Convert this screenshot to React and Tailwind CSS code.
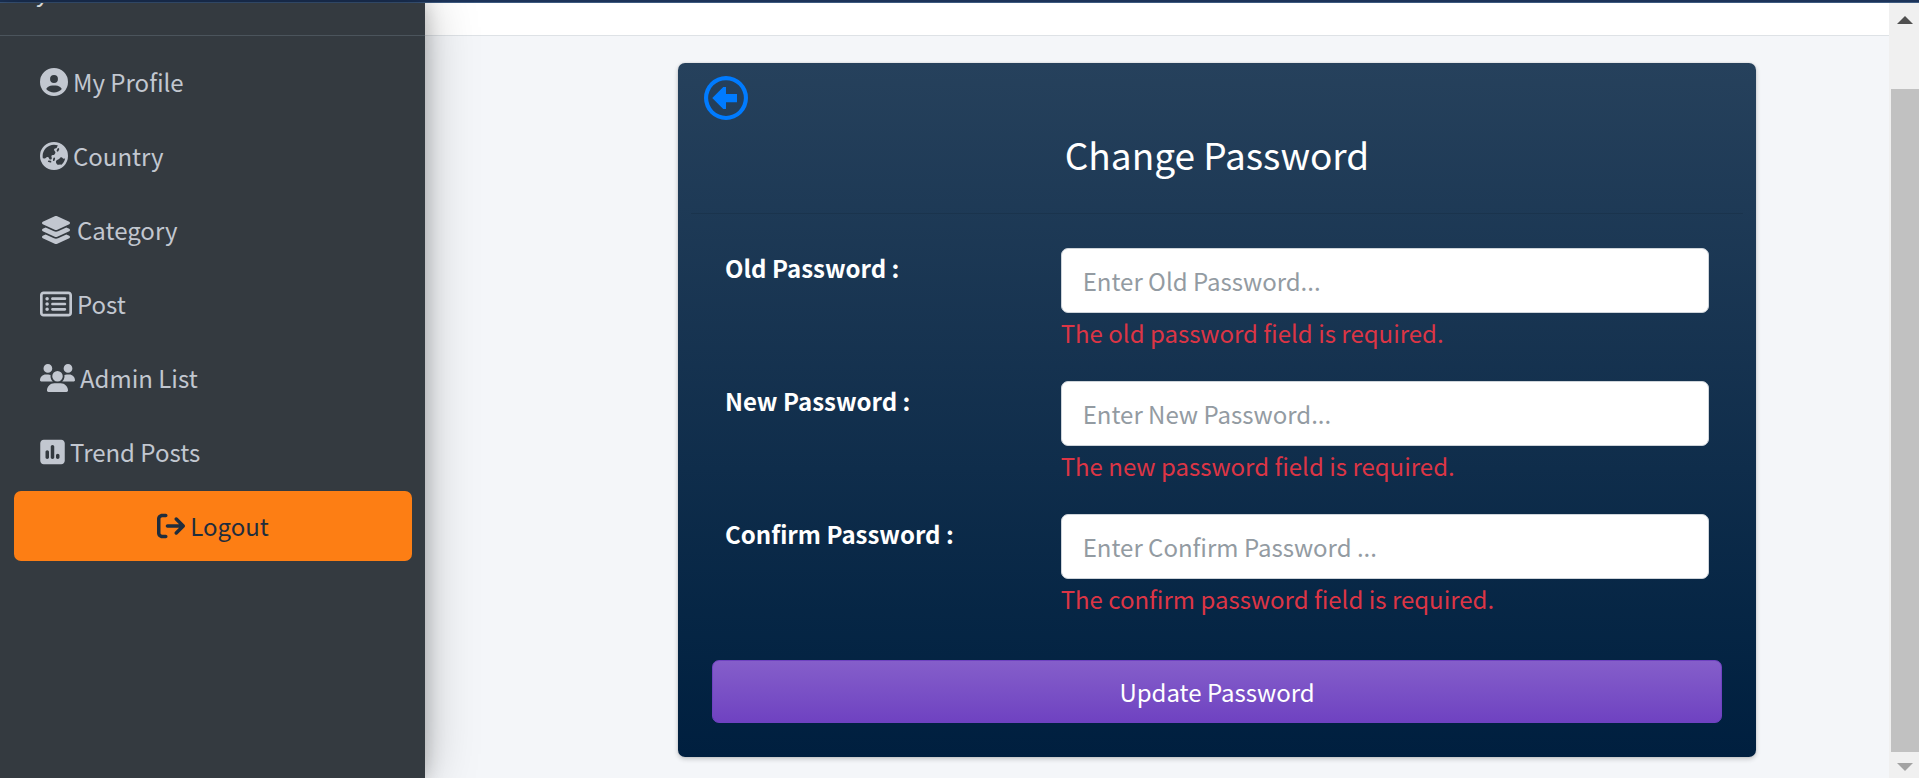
import {
  FaArrowRightFromBracket,
  FaCircleUser,
  FaEarthAsia,
  FaLayerGroup,
  FaRegCircleLeft,
  FaRegRectangleList,
  FaSquarePollVertical,
  FaUsers,
} from 'react-icons/fa6';

const links = [
  { label: 'My Profile', Icon: FaCircleUser, size: 'h-7 w-7' },
  { label: 'Country', Icon: FaEarthAsia, size: 'h-7 w-7' },
  { label: 'Category', Icon: FaLayerGroup, size: 'h-7 w-8' },
  { label: 'Post', Icon: FaRegRectangleList, size: 'h-8 w-8' },
  { label: 'Admin List', Icon: FaUsers, size: 'h-7 w-[35px]' },
  { label: 'Trend Posts', Icon: FaSquarePollVertical, size: 'h-7 w-[25px]' },
];

const fields = [
  { id: 'old-password', label: 'Old Password :', placeholder: 'Enter Old Password...', error: 'The old password field is required.' },
  { id: 'new-password', label: 'New Password :', placeholder: 'Enter New Password...', error: 'The new password field is required.' },
  { id: 'confirm-password', label: 'Confirm Password :', placeholder: 'Enter Confirm Password ...', error: 'The confirm password field is required.' },
];

function Sidebar() {
  return (
    <aside className="z-10 w-[425px] shrink-0 bg-[#343a40] text-[#c2c7d0] shadow-[0_0_49px_rgba(0,0,0,0.25),0_0_18px_rgba(0,0,0,0.22)]">
      <div className="flex h-[33px] items-end overflow-hidden border-b border-[#4b545c] pb-6 pl-9 text-white/80">
        <span>y</span>
      </div>
      <nav className="flex flex-col gap-1 pt-[11px] pr-[13px] pl-3.5">
        {links.map(({ label, Icon, size }) => (
          <a key={label} href="#" className="flex h-[70px] items-center gap-[5px] px-[26px]">
            <Icon className={size} />
            <span>{label}</span>
          </a>
        ))}
        <button type="button" className="flex h-[70px] items-center justify-center gap-[5px] rounded-[7px] bg-[#fd7e14] text-[#1f2d3d]">
          <FaArrowRightFromBracket className="size-7" />
          <span>Logout</span>
        </button>
      </nav>
    </aside>
  );
}

function Field({ id, label, placeholder, error }) {
  return (
    <div className="grid grid-cols-3 pb-7">
      <label htmlFor={id} className="px-[13px] font-bold text-white">{label}</label>
      <div className="col-span-2 pr-[13px] pl-3">
        <input
          id={id}
          type="password"
          placeholder={placeholder}
          className="block h-[65px] w-full rounded-[7px] border border-[#ced4da] bg-white px-[21px] text-[#495057] placeholder:text-[#939ba2]"
        />
        <p className="text-[#dc3545]">{error}</p>
      </div>
    </div>
  );
}

function ScrollTrack() {
  return (
    <div aria-hidden="true" className="flex w-[30px] shrink-0 flex-col bg-[#f0f0f0] pl-0.5">
      <svg viewBox="0 0 28 86" className="h-[86px] w-7" fill="#505050">
        <path d="M14 13 22 21H6z" />
      </svg>
      <div className="flex-1 bg-[#c1c1c1]" />
      <svg viewBox="0 0 28 26" className="h-[26px] w-7" fill="#a3a3a3">
        <path d="M6 11h16l-8 8z" />
      </svg>
    </div>
  );
}

export default function App() {
  return (
    <div className="flex min-h-screen flex-col bg-[#f4f6f9] font-['Noto_Sans_CJK_SC','Noto_Sans',sans-serif] text-[24px] leading-[40px]">
      <div className="h-[3px] border-b border-[#3d5a80] bg-[#1c3359]" />
      <div className="flex flex-1">
        <Sidebar />
        <div className="min-w-0 flex-1">
          <header className="h-[33px] border-b border-[#dee2e6] bg-white" />
          <main className="pt-[27px] pr-[133px] pb-5 pl-[253px]">
            <section className="rounded-[7px] bg-linear-to-b from-[#26415c] to-[#001f3f] px-[13px] pt-[13px] pb-[34px] shadow-[0_0_2px_rgba(0,0,0,0.125),0_2px_5px_rgba(0,0,0,0.2)]">
              <a href="#" aria-label="Back" className="ml-[13px] block w-11 text-[#007bff]">
                <FaRegCircleLeft className="size-11" />
              </a>
              <h1 className="mt-[9px] text-center text-[37px] leading-[50px] text-white">Change Password</h1>
              <hr className="mt-[34px] border-black/10" />
              <form className="px-[21px] pt-[34px]">
                {fields.map((field) => (
                  <Field key={field.id} {...field} />
                ))}
                <button
                  type="button"
                  className="mt-[13px] h-[63px] w-full rounded-[7px] border border-[#6f42c1] bg-linear-to-b from-[#855eca] to-[#6f42c1] text-white"
                >
                  Update Password
                </button>
              </form>
            </section>
          </main>
        </div>
        <ScrollTrack />
      </div>
    </div>
  );
}
